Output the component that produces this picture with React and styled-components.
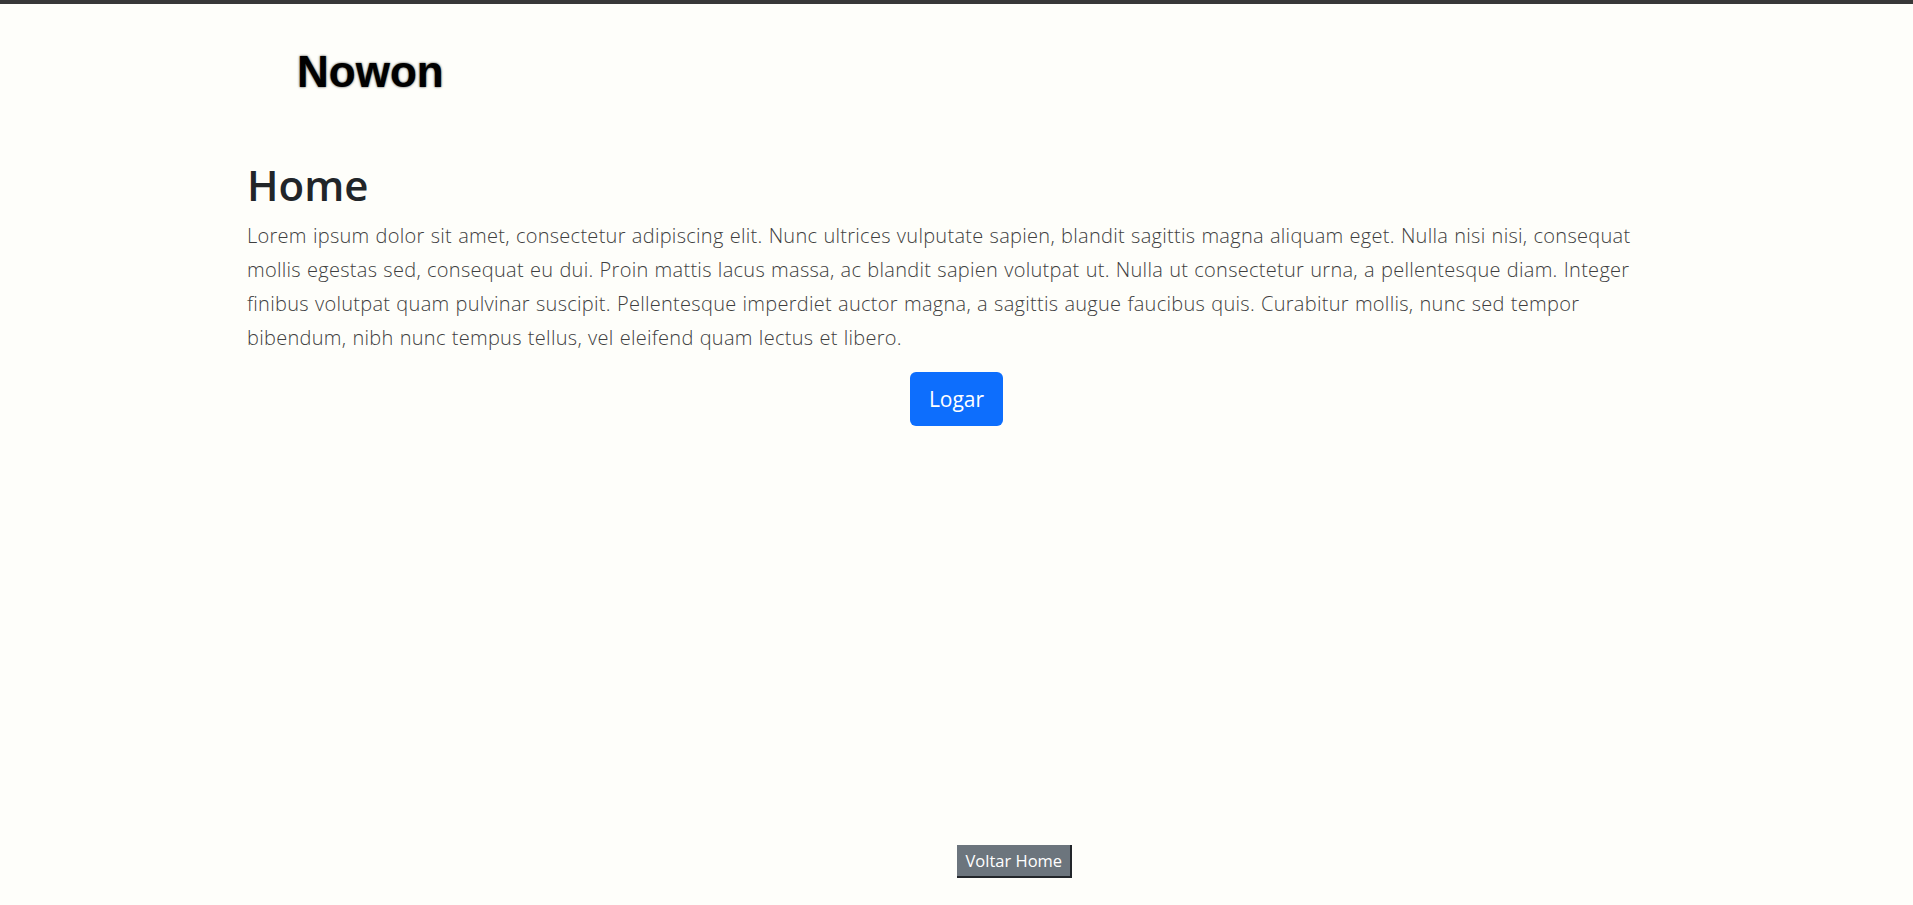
import React from "react";
import styled, { createGlobalStyle } from "styled-components";

const GlobalStyle = createGlobalStyle`
  *, *::before, *::after { box-sizing: border-box; }
  html, body { margin: 0; padding: 0; }
  body {
    background: #fefefa;
    font-family: "Open Sans", "Noto Sans", sans-serif;
    color: #212529;
  }
`;

const Page = styled.div`
  min-height: 100vh;
  border-top: 4px solid #383838;
  display: flex;
  flex-direction: column;
`;

const Container = styled.div`
  width: 1419px;
  margin: 0 auto;
`;

const Header = styled.header`
  padding: 43px 0 0 50px;
`;

const Brand = styled.div`
  font-family: "Liberation Sans", Arial, sans-serif;
  font-weight: 700;
  font-size: 44px;
  line-height: 49px;
  color: #000;
  text-shadow: 0 0 2px rgba(0, 0, 0, 0.6), 0 0 3px rgba(0, 0, 0, 0.3);
`;

const Main = styled.main`
  flex: 1;
  padding-top: 64px;
  display: flex;
  flex-direction: column;
`;

const Title = styled.h1`
  margin: 0;
  font-family: "Open Sans", sans-serif;
  font-weight: 600;
  font-size: 42px;
  line-height: 50px;
  color: #212529;
`;

const Text = styled.p`
  margin: 9px 0 0;
  max-width: 1396px;
  font-family: "Open Sans", sans-serif;
  font-weight: 300;
  font-size: 20px;
  line-height: 34px;
  letter-spacing: 0.28px;
  word-spacing: 0.6px;
  color: #3f3f3f;
  font-variant-ligatures: none;
`;

const Actions = styled.div`
  display: flex;
  justify-content: center;
  margin-top: 17px;
`;

const PrimaryButton = styled.button`
  font-family: "Open Sans", sans-serif;
  font-size: 21px;
  line-height: 32px;
  padding: 11px 19px;
  border: 0;
  border-radius: 6px;
  background: #0d6efd;
  color: #fff;
  cursor: pointer;
`;

const Footer = styled.footer`
  display: flex;
  padding: 0 0 27px 50%;
`;

const SecondaryButton = styled.button`
  font-family: "Open Sans", sans-serif;
  font-size: 16.5px;
  line-height: 31px;
  padding: 0 8px 0 9px;
  border: 0;
  border-right: 2px solid #22262a;
  border-bottom: 2px solid #22262a;
  background: #6c757d;
  color: #fff;
  cursor: pointer;
`;

export default function App() {
  return (
    <>
      <GlobalStyle />
      <Page>
        <Container>
          <Header>
            <Brand>Nowon</Brand>
          </Header>
        </Container>
        <Main>
          <Container>
            <Title>Home</Title>
            <Text>
              Lorem ipsum dolor sit amet, consectetur adipiscing elit. Nunc ultrices vulputate sapien,
              blandit sagittis magna aliquam eget. Nulla nisi nisi, consequat mollis egestas sed,
              consequat eu dui. Proin mattis lacus massa, ac blandit sapien volutpat ut. Nulla ut
              consectetur urna, a pellentesque diam. Integer finibus volutpat quam pulvinar suscipit.
              Pellentesque imperdiet auctor magna, a sagittis augue faucibus quis. Curabitur mollis,
              nunc sed tempor bibendum, nibh nunc tempus tellus, vel eleifend quam lectus et libero.
            </Text>
            <Actions>
              <PrimaryButton>Logar</PrimaryButton>
            </Actions>
          </Container>
        </Main>
        <Footer>
          <SecondaryButton>Voltar Home</SecondaryButton>
        </Footer>
      </Page>
    </>
  );
}
